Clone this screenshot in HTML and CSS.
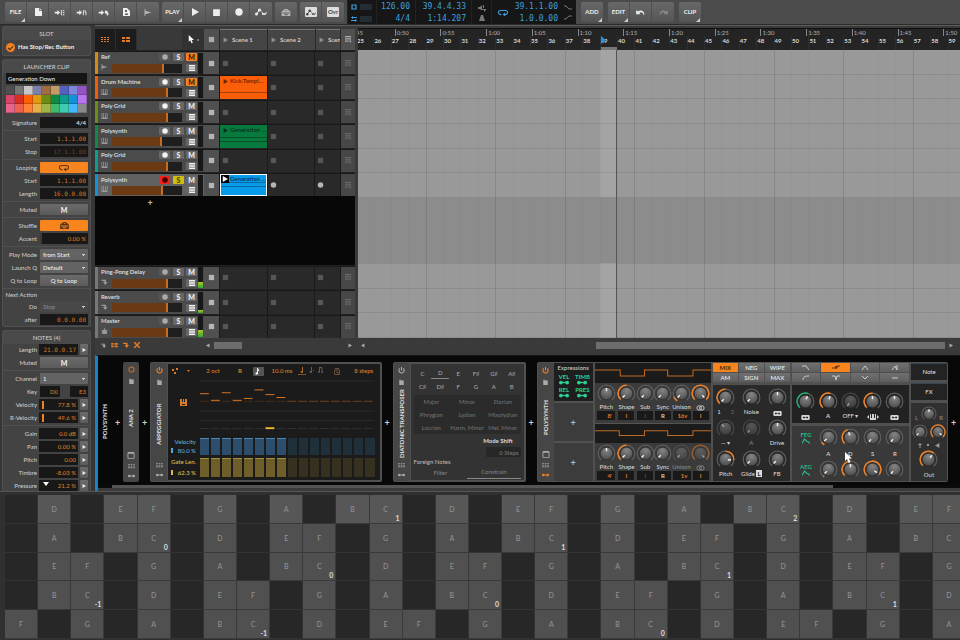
FILE: index.html
```html
<!DOCTYPE html>
<html lang="en">
<head>
<meta charset="utf-8">
<title>Studio</title>
<link rel="stylesheet" href="styles.css">
</head>
<body>
<svg class="defs" width="0" height="0">
  <defs>
    <radialGradient id="cap" cx="50%" cy="25%" r="80%"><stop offset="0" stop-color="#858585"/><stop offset="1" stop-color="#484848"/></radialGradient>
    <symbol id="page" viewBox="0 0 8 8"><path d="M1 0h4v3h3v5H1z"/><path d="M5.600 0l2 2.300h-2z"/></symbol>
    <symbol id="toA" viewBox="0 0 12 8"><path d="M0 3h3V1l3 3-3 3V5H0zM7 1h1v6H7zM9 1h2v1H9zM9 3.500h2v1H9zM9 6h2v1H9z"/></symbol>
    <symbol id="toB" viewBox="0 0 12 8"><path d="M0 3h3V1l3 3-3 3V5H0zM7 1h1v6H7zM9 1h1v2h1v4h-1V4H9z"/></symbol>
    <symbol id="toC" viewBox="0 0 12 8"><path d="M0 3h3V1l3 3-3 3V5H0zM7 2h3v2h1v3H9V5H7z"/></symbol>
    <symbol id="save" viewBox="0 0 8 8"><path fill-rule="evenodd" d="M1 0h4l3 3v5H1zM3 2v2h2V2zM3 5.500V7h3V5.500z"/></symbol>
    <symbol id="audio" viewBox="0 0 8 8"><path d="M0 0v8h1V6l7-2-7-2V0z"/></symbol>
    <symbol id="play" viewBox="0 0 8 8"><path d="M1 0l7 4-7 4z"/></symbol>
    <symbol id="stop" viewBox="0 0 8 8"><path d="M1 1h6v6H1z"/></symbol>
    <symbol id="dot" viewBox="0 0 8 8"><circle cx="4" cy="4" r="3.700"/></symbol>
    <symbol id="auto" viewBox="0 0 12 8"><path fill="none" stroke="currentColor" d="M1.500 6l3-4 2 1"/><circle cx="1.500" cy="6" r="1.500"/><circle cx="4.500" cy="2" r="1.500"/><path fill="none" stroke="currentColor" d="M7 4l1 3 1-2 1 2 1.500-3"/></symbol>
    <symbol id="box" viewBox="0 0 10 8"><path fill-rule="evenodd" d="M0 3l2-2h1V0h4v1h1l2 2v5H0zM1 4v1h8V4zM3 6v1h4V6zM4 1v1h2V1z"/></symbol>
    <symbol id="undo" viewBox="0 0 10 8"><path d="M0 1v5h5L3.500 4.500C5 3 7.500 3.500 8.500 6.500h1C9.500 2 5 .500 2 2.800z"/></symbol>
    <symbol id="loop" viewBox="0 0 12 8"><path fill="none" stroke="currentColor" stroke-width="1.300" d="M4 6.500H3a2.500 2.500 0 0 1 0-5h6a2.500 2.500 0 0 1 0 5H7"/><path d="M8.500 4v4.500L5.500 6.500z"/></symbol>
    <symbol id="keys" viewBox="0 0 8 8"><path d="M0 0h1v6h1V0h1v6h2V0h1v6h1V0h1v8H0z"/></symbol>
    <symbol id="send" viewBox="0 0 8 8"><path d="M0 1h6v3h2L5 8 2 4h2V2.500H0z"/></symbol>
    <symbol id="crown" viewBox="0 0 8 8"><path d="M0 2l2 1.500L4 0l2 3.500L8 2 7 8H1z"/></symbol>
    <symbol id="list" viewBox="0 0 8 8"><path d="M0 0h8v2H0zM0 3h8v2H0zM0 6h8v2H0z"/></symbol>
    <symbol id="queue" viewBox="0 0 8 8"><path d="M0 0h7v1.500H0zM0 2.500h7V4H0zM0 5h4v1.500H0zM4.500 5h3L6 8z"/></symbol>
    <symbol id="rows" viewBox="0 0 8 6"><path d="M0 0h2v1H0zM3 0h2v1H3zM6 0h2v1H6zM0 2h2v1H0zM3 2h2v1H3zM6 2h2v1H6zM0 4h2v1H0zM3 4h2v1H3zM6 4h2v1H6z"/></symbol>
    <symbol id="lanes" viewBox="0 0 8 6"><path d="M0 0h3v2H0zM4 0h4v2H4zM0 3h3v2H0zM4 3h4v2H4z"/></symbol>
    <symbol id="cursor" viewBox="0 0 8 12"><path d="M1 0v9l2-2 1.600 4 1.800-.800L5 6.500h3z"/></symbol>
    <symbol id="power" viewBox="0 0 8 8"><path fill="none" stroke="currentColor" stroke-width="1.200" d="M2 1.600a3 3 0 1 0 4 0M4 0v4"/></symbol>
    <symbol id="folder" viewBox="0 0 8 8"><path d="M1 1h2v1h4v6H1z"/></symbol>
    <symbol id="window" viewBox="0 0 8 8"><path fill-rule="evenodd" d="M1 0h6l1 1v6L7 8H1L0 7V1zM1 2v5h6V2z"/></symbol>
    <symbol id="mod" viewBox="0 0 8 4"><circle cx="1.500" cy="2" r="1.500"/><circle cx="6.500" cy="2" r="1.500"/><path d="M2 1.500h4v1H2z"/></symbol>
    <symbol id="note" viewBox="0 0 8 8"><path d="M3 0h1c0 2 2 2 1.500 4.500C5.300 3.500 5 3 4 3v3.500A1.500 1.300 0 1 1 3 5z"/></symbol>
    <symbol id="env" viewBox="0 0 8 6"><path fill="none" stroke="currentColor" stroke-width="1.200" d="M0 5.500L2.500 1 5 3.500h1l2 2"/></symbol>
    <symbol id="pair" viewBox="0 0 10 6"><path fill-rule="evenodd" d="M1 0h8l1 1v4L9 6H1L0 5V1zM2 2v2h2V2zM6 2v2h2V2zM4 2.700v.600h2v-.600z"/></symbol>
    <symbol id="rings" viewBox="0 0 10 6"><g fill="none" stroke="currentColor"><circle cx="3.500" cy="3" r="2.500"/><circle cx="6.500" cy="3" r="2.500"/></g></symbol>
  </defs>
</svg>

<div class="app">
  <header class="toolbar">
    <div class="tools">
      <button class="menu">FILE</button>
      <button aria-label="New"><svg width="8" height="8"><use href="#page"/></svg></button>
      <button aria-label="Load"><svg width="12" height="7"><use href="#toA"/></svg></button>
      <button aria-label="Import"><svg width="12" height="7"><use href="#toB"/></svg></button>
      <button aria-label="Export"><svg width="12" height="7"><use href="#toC"/></svg></button>
      <button aria-label="Save"><svg width="8" height="8"><use href="#save"/></svg></button>
      <button class="soft" aria-label="Audio"><svg width="8" height="7"><use href="#audio"/></svg></button>
    </div>
    <div class="tools">
      <button class="menu">PLAY</button>
      <button aria-label="Play"><svg width="8" height="8"><use href="#play"/></svg></button>
      <button aria-label="Stop"><svg width="9" height="9"><use href="#stop"/></svg></button>
      <button aria-label="Record"><svg width="8" height="8"><use href="#dot"/></svg></button>
      <button aria-label="Automation"><svg width="12" height="8"><use href="#auto"/></svg></button>
    </div>
    <div class="tools"><button class="soft" aria-label="Groove"><svg width="10" height="7"><use href="#box"/></svg></button></div>
    <div class="tools">
      <button aria-label="Automation write"><span class="lit"><svg width="10" height="7"><use href="#auto"/></svg></span></button>
      <button><span class="lit">Ovr</span></button>
    </div>
    <div class="transport">
      <div class="cell marks">
        <span><svg width="6" height="6" viewBox="0 0 6 6"><path fill="none" stroke="currentColor" stroke-width="1.200" d="M1 1h4v4H1z"/></svg><i></i></span>
        <span><svg width="6" height="6" viewBox="0 0 6 6"><path d="M0 1.500L2 0v1h4v1H2v1zM6 4.500L4 3v1H0v1h4v1z"/></svg><i></i></span>
      </div>
      <div class="cell tempo"><span>126.00</span><span>4/4</span></div>
      <div class="cell time"><span>39.4.4.33</span><span>1:14.207</span></div>
      <div class="cell click">
        <svg width="8" height="8" viewBox="0 0 8 8"><path d="M0 3h2l2-2v4h4v1L6 8V6H3L2 5H0zM5 1h1v3H5z"/></svg>
        <svg width="6" height="6" viewBox="0 0 6 6"><path d="M2 0h2l2 6H0zM5.500 0L3 4"/></svg>
      </div>
      <div class="cell loopicon"><svg width="10" height="7"><use href="#loop"/></svg></div>
      <div class="cell time pos"><span>39.1.1.00</span><span>1.0.0.00</span></div>
      <div class="cell click punch">
        <svg width="8" height="5" viewBox="0 0 8 5"><path fill="none" stroke="currentColor" d="M0 1h2l3 3h3"/></svg>
        <svg width="8" height="5" viewBox="0 0 8 5"><path fill="none" stroke="currentColor" d="M0 4h2l3-3h3"/></svg>
      </div>
    </div>
    <div class="tools"><button class="menu">ADD</button></div>
    <div class="tools">
      <button class="menu">EDIT</button>
      <button aria-label="Undo"><svg width="9" height="7"><use href="#undo"/></svg></button>
      <button class="off" aria-label="Redo"><svg class="flip" width="9" height="7"><use href="#undo"/></svg></button>
    </div>
    <div class="tools"><button class="menu">CLIP</button></div>
  </header>

  <aside class="inspector">
    <section class="panel">
      <h2>SLOT</h2>
      <label class="check"><input type="checkbox" checked><span>Has Stop/Rec Button</span></label>
    </section>
    <section class="panel">
      <h2>LAUNCHER CLIP</h2>
      <input class="name" type="text" value="Generation Down" aria-label="Clip name">
      <div class="palette" id="palette"></div>
      <div class="group first"><div class="row"><label for="sig">Signature</label><input id="sig" class="light" value="4/4"></div></div>
      <div class="group">
        <div class="row"><label for="st">Start</label><input id="st" class="num" value="1.1.1.00"></div>
        <div class="row"><label for="sp">Stop</label><input id="sp" class="num dim" value="17.1.1.00"></div>
      </div>
      <div class="group">
        <div class="row"><span>Looping</span><button class="on" aria-label="Looping"><svg width="10" height="7"><use href="#loop"/></svg></button></div>
        <div class="row"><label for="ls">Start</label><input id="ls" class="num" value="1.1.1.00"></div>
        <div class="row"><label for="ll">Length</label><input id="ll" class="num" value="16.0.0.00"></div>
      </div>
      <div class="group"><div class="row"><span>Muted</span><button class="bold">M</button></div></div>
      <div class="group">
        <div class="row"><span>Shuffle</span><button class="on" aria-label="Shuffle"><svg width="9" height="7"><use href="#box"/></svg></button></div>
        <div class="row"><label for="ac">Accent</label><input id="ac" value="0.00 %"></div>
      </div>
      <div class="group">
        <div class="row"><label for="pm">Play Mode</label><select id="pm"><option>from Start</option></select></div>
        <div class="row"><label for="lq">Launch Q</label><select id="lq"><option>Default</option></select></div>
        <div class="row"><span>Q to Loop</span><button>Q to Loop</button></div>
      </div>
      <div class="group">
        <div class="row head"><span>Next Action</span></div>
        <div class="row"><label for="do">Do</label><select id="do" disabled><option>Stop</option></select></div>
        <div class="row"><label for="af">after</label><input id="af" class="num" value="0.0.0.00"></div>
      </div>
    </section>
    <section class="panel notes">
      <h2>NOTES (4)</h2>
      <div class="group first">
        <div class="row"><label for="nl">Length</label><input id="nl" class="num" value="21.0.0.17"><button class="step" aria-label="More"><svg width="4" height="4"><use href="#play"/></svg></button></div>
        <div class="row"><span>Muted</span><button class="bold">M</button></div>
      </div>
      <div class="group">
        <div class="row"><label for="ch">Channel</label><select id="ch"><option>1</option></select></div>
        <div class="row"><label for="k1">Key</label><input id="k1" class="key" value="D0"><input class="key" value="E3" aria-label="Highest key"></div>
        <div class="row"><label for="ve">Velocity</label><input id="ve" class="bar" value="77.8 %"><button class="step" aria-label="More"><svg width="4" height="4"><use href="#play"/></svg></button></div>
        <div class="row"><label for="rv">R-Velocity</label><input id="rv" class="bar" value="49.6 %"><button class="step" aria-label="More"><svg width="4" height="4"><use href="#play"/></svg></button></div>
      </div>
      <div class="group">
        <div class="row"><label for="ga">Gain</label><input id="ga" value="0.0 dB"><button class="step" aria-label="More"><svg width="4" height="4"><use href="#play"/></svg></button></div>
        <div class="row"><label for="pa">Pan</label><input id="pa" value="0.00 %"><button class="step" aria-label="More"><svg width="4" height="4"><use href="#play"/></svg></button></div>
        <div class="row"><label for="pi">Pitch</label><input id="pi" value="0.00"><button class="step" aria-label="More"><svg width="4" height="4"><use href="#play"/></svg></button></div>
        <div class="row"><label for="ti">Timbre</label><input id="ti" value="-8.03 %"><button class="step" aria-label="More"><svg width="4" height="4"><use href="#play"/></svg></button></div>
        <div class="row"><label for="pr">Pressure</label><input id="pr" value="21.2 %"><button class="step" aria-label="More"><svg width="4" height="4"><use href="#play"/></svg></button></div>
      </div>
    </section>
    <svg class="more" width="6" height="4" viewBox="0 0 6 4"><path d="M0 0h6L3 4z"/></svg>
  </aside>

  <section class="launcher">
    <div class="lhead">
      <button class="view" aria-label="Launcher view"><svg width="8" height="6"><use href="#rows"/></svg></button>
      <button class="view" aria-label="Arranger view"><svg width="8" height="6"><use href="#lanes"/></svg></button>
      <span class="blank"></span>
      <button class="pointer" aria-label="Pointer tool"><svg width="6" height="9"><use href="#cursor"/></svg><i></i></button>
      <span class="stopcol"><svg width="7" height="7"><use href="#stop"/></svg></span>
      <button class="scene"><svg width="5" height="6"><use href="#play"/></svg>Scene 1</button>
      <button class="scene"><svg width="5" height="6"><use href="#play"/></svg>Scene 2</button>
      <button class="scene"><svg width="5" height="6"><use href="#play"/></svg>Scene 3</button>
      <span class="endcol"><svg width="7" height="7"><use href="#queue"/></svg></span>
    </div>
    <div class="tracks main" id="tracks"></div>
    <div class="void"><button aria-label="Add track">+</button></div>
    <div class="tracks fx" id="effects"></div>
    <div class="lfoot">
      <svg class="grey" width="5" height="5"><use href="#send"/></svg>
      <svg width="7" height="5"><use href="#lanes"/></svg>
      <svg width="6" height="6"><use href="#send"/></svg>
      <svg width="6" height="6" viewBox="0 0 6 6"><path fill="none" stroke="currentColor" stroke-width="1.500" d="M0 0l6 6M6 0L0 6"/></svg>
      <div class="scroll"><svg class="flip" width="4" height="5"><use href="#play"/></svg><i></i><svg width="4" height="5"><use href="#play"/></svg></div>
    </div>
  </section>

  <section class="arranger">
    <div class="ruler"><div class="times" id="times"></div><div class="bars" id="bars"></div></div>
    <div class="canvas">
      <div class="lanes main"><i></i><i></i><i></i><i></i><i></i><i></i></div>
      <div class="lanes gap"></div>
      <div class="lanes fx"><i></i><i></i><i></i></div>
      <div class="columns" id="columns"></div>
    </div>
    <div class="afoot"><svg class="flip" width="4" height="5"><use href="#play"/></svg><i></i><svg width="4" height="5"><use href="#play"/></svg></div>
  </section>

  <section class="devices">
    <div class="chain">
      <div class="rail root"><b>POLYSYNTH</b></div>
      <button class="plus">+</button>
      <div class="rail boxed"><svg class="orange" width="7" height="7" viewBox="0 0 8 8"><circle cx="4" cy="4" r="3" fill="none" stroke="currentColor"/></svg><svg width="7" height="6"><use href="#folder"/></svg><b>ANA 2</b><svg width="8" height="7"><use href="#window"/></svg><svg width="7" height="5"><use href="#rows"/></svg><svg width="7" height="4"><use href="#mod"/></svg></div>
      <button class="plus">+</button>

      <article class="device arp">
        <div class="rail"><svg class="orange" width="7" height="7"><use href="#power"/></svg><svg width="7" height="6"><use href="#folder"/></svg><b>ARPEGGIATOR</b><svg width="7" height="5"><use href="#rows"/></svg><svg width="7" height="4"><use href="#mod"/></svg></div>
        <div class="arpbody">
          <div class="arptop">
            <svg width="6" height="6" viewBox="0 0 6 6"><path d="M0 1h2v2H0zM2 4h2v2H2zM4 0h2v2H4z"/></svg>
            <svg width="3" height="2" viewBox="0 0 3 2"><path d="M0 0h3L1.500 2z"/></svg>
            <span>2 oct</span><b>R</b>
            <button aria-label="Note timing"><svg width="8" height="7"><use href="#note"/></svg></button>
            <span>10.0 ms</span>
            <svg class="feel" width="26" height="8" viewBox="0 0 26 8"><path d="M4 0h1v5a1.300 1 0 1 1-1-1z" fill="#b06a2a"/><path d="M0 7h8v1H0z" fill="#8a5020"/><path d="M13 0h1v5a1.300 1 0 1 1-1-1zM15 3h1v1h-1zM21 0h3l1 5a1 1 0 1 1-1-1l-1-3h-1v4a1 1 0 1 1-1-1z" fill="#5d5d5d"/></svg>
            <svg class="faint" width="6" height="7" viewBox="0 0 6 7"><path fill="none" stroke="currentColor" d="M1 .500h4M.500 2h5v4.500h-5zM3 3v2h2"/></svg>
            <span>8 steps</span>
          </div>
          <div class="arpgrid">
            <div class="pad"><svg width="7" height="7" viewBox="0 0 7 7"><path fill-rule="evenodd" d="M0 0h2v3h1V0h1v3h1V0h2v7H0zM2 5v1h3V5z"/></svg></div>
            <svg class="pattern" id="pattern" viewBox="0 0 176 58" preserveAspectRatio="none"></svg>
            <div class="lab blue"><span>Velocity</span><span><i></i>80.0 %</span></div>
            <div class="bins blue" id="vel"></div>
            <div class="lab yellow"><span>Gate Len.</span><span><i></i>62.3 %</span></div>
            <div class="bins yellow" id="gate"></div>
          </div>
        </div>
      </article>
      <button class="plus">+</button>

      <article class="device dia">
        <div class="rail"><svg width="7" height="7"><use href="#power"/></svg><svg width="7" height="6"><use href="#folder"/></svg><b>DIATONIC TRANSPOSER</b><svg width="7" height="5"><use href="#rows"/></svg><svg width="7" height="4"><use href="#mod"/></svg></div>
        <div class="diabody">
          <div class="roots"><button>C</button><button class="sel">D</button><button>E</button><button>F♯</button><button>G♯</button><button>A♯</button><button>C♯</button><button>D♯</button><button>F</button><button>G</button><button>A</button><button>B</button></div>
          <div class="modes"><button>Major</button><button>Minor</button><button>Dorian</button><button>Phrygian</button><button>Lydian</button><button>Mixolydian</button><button>Locrian</button><button>Harm. Minor</button><button>Mel. Minor</button></div>
          <label class="shift" for="ms">Mode Shift</label>
          <input id="ms" value="0 Steps">
          <div class="foreign">Foreign Notes</div>
          <div class="pick"><button>Filter</button><button class="sel">Constrain</button></div>
        </div>
      </article>
      <button class="plus">+</button>

      <article class="device poly">
        <div class="rail"><svg class="orange" width="7" height="7"><use href="#power"/></svg><svg width="7" height="6"><use href="#folder"/></svg><b>POLYSYNTH</b><svg width="8" height="7"><use href="#window"/></svg><svg width="7" height="5"><use href="#rows"/></svg><svg class="orange" width="7" height="4"><use href="#mod"/></svg></div>
        <div class="mods">
          <div class="expr"><h3>Expressions</h3>
            <span>VEL<svg width="10" height="5"><use href="#mod"/></svg></span><span>TIMB<svg width="10" height="5"><use href="#mod"/></svg></span><span>REL<svg width="10" height="5"><use href="#mod"/></svg></span><span>PRES<svg width="10" height="5"><use href="#mod"/></svg></span>
          </div>
          <button>+</button><button>+</button>
        </div>
        <div class="oscs">
          <div class="wave"><svg viewBox="0 0 115 20" preserveAspectRatio="none"><path d="M0 7h25v6h24V7h23v6h25V7h18"/></svg></div>
          <div class="osc">
            <span><i class="knob" data-a="0"></i>Pitch</span><span><i class="knob" data-a="-135" data-arc="-135,0"></i>Shape</span><span><i class="knob" data-a="-135"></i>Sub</span><span><i class="knob" data-a="-135"></i>Sync</span><span><i class="knob" data-a="-135" data-arc="-150,-115"></i>Unison</span><span><i class="knob" data-a="135" data-arc="-135,135"></i><svg width="9" height="6"><use href="#rings"/></svg></span>
            <input value="8'" aria-label="Octave 1"><button>I</button><button class="off">I</button><button class="w">R</button><input value="16v" aria-label="Voices 1"><button>I</button>
          </div>
          <div class="wave second"><svg viewBox="0 0 115 20" preserveAspectRatio="none"><path d="M0 7h24v5h25V7h23v5h25V7h18"/></svg></div>
          <div class="osc">
            <span><i class="knob" data-a="0"></i>Pitch</span><span><i class="knob" data-a="-135" data-arc="-135,0"></i>Shape</span><span><i class="knob" data-a="-135"></i>Sub</span><span><i class="knob" data-a="-135"></i>Sync</span><span class="fade"><i class="knob" data-a="-135"></i>Unison</span><span class="fade"><i class="knob" data-a="135" data-arc="-135,135"></i><svg width="9" height="6"><use href="#rings"/></svg></span>
            <input value="4'" aria-label="Octave 2"><button>I</button><button class="off">I</button><button class="w">R</button><input value="1v" aria-label="Voices 2"><button>I</button>
          </div>
        </div>
        <div class="mix">
          <div class="tabs three"><button class="on">MIX</button><button>NEG</button><button>WIPE</button><button>AM</button><button>SIGN</button><button>MAX</button></div>
          <div class="mixknobs">
            <span><i class="knob" data-a="-135" data-arc="-135,0"></i><span class="ab">1<s>2</s></span></span><span><i class="knob" data-a="-135"></i>Noise</span><span><i class="knob" data-a="0"></i><svg width="9" height="5"><use href="#pair"/></svg></span>
            <span><i class="knob low" data-a="-40"></i>— ▾</span><span class="fade"><i class="knob" data-a="-135"></i>A</span><span><i class="knob" data-a="0"></i>Drive</span>
            <span><i class="knob" data-a="95" data-arc="0,95"></i>Pitch</span><span><i class="knob" data-a="-135"></i><span>Glide <b class="l">L</b></span></span><span><i class="knob" data-a="-135"></i>FB</span>
          </div>
        </div>
        <div class="filter">
          <div class="tabs four">
            <button aria-label="Low-pass"><svg viewBox="0 0 8 5"><path d="M0 1h4l3 4"/></svg></button><button class="on" aria-label="Low-pass MG"><svg viewBox="0 0 8 5"><path d="M0 3h3l1-2v3l1-3h3M5 1v2"/></svg></button><button aria-label="Band-pass"><svg viewBox="0 0 8 5"><path d="M1 5l3-4 3 4"/></svg></button><button aria-label="Peak"><svg viewBox="0 0 8 5"><path d="M1 5l3-4 2 4V0"/></svg></button>
            <button aria-label="High-pass"><svg viewBox="0 0 8 5"><path d="M1 5c0-3 2-4 6-4"/></svg></button><button aria-label="High-pass MG"><svg viewBox="0 0 8 5"><path d="M0 1h3l1 4 1-4h3"/></svg></button><button aria-label="Notch"><svg viewBox="0 0 8 5"><path d="M1 1l3 3 3-3"/></svg></button><button aria-label="Off"><svg viewBox="0 0 8 5"><path d="M1 3h6"/></svg></button>
          </div>
          <div class="fknobs">
            <span><i class="knob" data-a="20" data-arc="-135,20" data-c="#20b070"></i><svg width="9" height="5"><use href="#pair"/></svg></span><span><i class="knob" data-a="15" data-arc="-135,15"></i><b>A</b></span><span><i class="knob shade" data-a="-145"></i>OFF ▾</span><span><i class="knob" data-a="0" data-arc="-135,0"></i><svg width="12" height="6" viewBox="0 0 12 6"><path d="M0 3l2-2v4zM12 3l-2-2v4zM3 0h1v4h1V0h2v4h1V0h1v6H3z"/></svg></span><span><i class="knob" data-a="0"></i><svg width="9" height="5"><use href="#pair"/></svg></span>
          </div>
          <div class="envs">
            <span class="tag">FEG<svg width="8" height="6"><use href="#env"/></svg></span><i class="knob" data-a="-130" data-arc="-150,-125"></i><i class="knob" data-a="-20" data-arc="-135,-20"></i><i class="knob" data-a="-140"></i><i class="knob" data-a="-140"></i>
            <span></span><span>A</span><span>D</span><span>S</span><span>R</span>
            <span class="tag">AEG<svg width="8" height="6"><use href="#env"/></svg></span><i class="knob" data-a="-135" data-arc="-150,-140"></i><i class="knob" data-a="0" data-arc="-135,0"></i><i class="knob" data-a="125" data-arc="-135,125"></i><i class="knob" data-a="-140"></i>
          </div>
          <svg class="mouse" width="8" height="12"><use href="#cursor"/></svg>
        </div>
        <div class="output">
          <button>Note</button><button>FX</button>
          <div class="outs">
            <div class="pan"><i>L</i><i class="knob" data-a="0"></i><i>R</i></div>
            <div class="duo"><i class="knob" data-a="-135"></i><i class="knob" data-a="130" data-arc="-135,135"></i></div>
            <div class="marks2"><svg width="4" height="5" viewBox="0 0 4 5"><path d="M2 0l2 2H2.500v3h-1V2H0z"/></svg><svg width="2" height="2" viewBox="0 0 2 2"><path d="M0 0h2v2H0z"/></svg><svg class="flip" width="5" height="5"><use href="#play"/></svg></div>
            <i class="knob big" data-a="40" data-arc="-135,40"></i>
            <i>Out</i>
          </div>
        </div>
      </article>
      <button class="plus">+</button>
    </div>
    <div class="dscroll"><i></i></div>
  </section>

  <section class="keyboard"><div class="pads" id="pads"></div></section>
</div>
<script src="app.js"></script>
</body>
</html>
```

FILE: styles.css
```css
* { box-sizing: border-box; }
html, body { height: 100%; }
body {
  margin: 0;
  background: #2e2e2e;
  color: #c9c9c9;
  font: 6px/8px Lato, "Open Sans", sans-serif;
  font-weight: 500;
  overflow: hidden;
}
.defs { position: absolute; }
svg { fill: currentColor; flex: none; }
button, input, select {
  margin: 0; padding: 0; border: 0; border-radius: 0; min-width: 0;
  background: none; color: inherit; font: inherit; appearance: none; outline: 0;
}
i { font-style: normal; }
s { text-decoration: none; }
h2, h3 { margin: 0; font: inherit; text-align: center; }

.app {
  height: 100vh;
  display: grid;
  grid-template-columns: 95px 261px 1fr;
  grid-template-rows: 25px minmax(0, 330fr) minmax(0, 136fr) minmax(0, 149fr);
}

/* Toolbar */
.toolbar {
  grid-column: 1 / -1;
  display: flex; align-items: flex-start; gap: 3px;
  padding: 0 5px;
  background: #4b4b4b;
  border-bottom: 1px solid #2b2b2b;
}
.tools { display: flex; margin-top: 2px; border-radius: 2px; background: linear-gradient(#686868, #555); overflow: hidden; }
.tools button {
  position: relative; width: 22px; height: 20px;
  display: flex; align-items: center; justify-content: center;
  border-right: 1px solid #4e4e4e; color: #eee; font-weight: 700;
}
.tools button:last-child { border-right: 0; }
.tools .menu::after { content: ""; position: absolute; right: 1px; bottom: 0; border: 2px solid; border-color: transparent #ccc #ccc transparent; }
.tools .soft { color: #b5b5b5; }
.tools .off { color: #888; }
.flip { transform: scaleX(-1); }
.lit { display: flex; align-items: center; justify-content: center; width: 12px; height: 10px; border-radius: 1px; background: #ddd; color: #444; }
.transport ~ .tools { margin-left: 2px; }
.transport { display: flex; height: 24px; background: #161616; color: #3fa0dd; font: 8px/12px "DejaVu Sans Mono", monospace; }
.cell { display: flex; flex-direction: column; align-items: flex-end; padding: 0 5px; border-left: 1px solid #222; }
.cell > span { height: 12px; padding-top: 1px; }
.marks { width: 29px; padding: 0 4px 0 3px; }
.marks > span { display: flex; align-items: center; gap: 3px; }
.marks i { width: 12px; height: 6px; background: #242d33; }
.tempo { width: 39px; }
.time { width: 56px; }
.time.pos { width: 47px; border: 0; padding: 0 2px; }
.click { width: 20px; color: #777; justify-content: space-around; align-items: center; padding: 2px 0; }
.punch { width: 16px; border: 0; }
.loopicon { width: 22px; justify-content: center; }

/* Inspector */
.inspector {
  position: relative;
  grid-row: 2 / 4; min-height: 0; overflow: hidden;
  padding: 1px 4px 0 2px;
  background: #363636;
}
.panel { background: #434343; border: 1px solid #505050; border-radius: 2px; padding: 0 3px 1px 3px; margin-bottom: 3px; }
.panel h2 { height: 13px; line-height: 13px; color: #ccc; margin: 0 -3px; background: #4a4a4a; }
.check { display: flex; align-items: center; gap: 3px; height: 14px; color: #eee; font-weight: 700; }
.check input { width: 9px; height: 9px; border-radius: 50%; background: #f58020; display: grid; place-items: center; }
.check input::after { content: ""; width: 4px; height: 2px; border: 1px solid #331; border-top: 0; border-right: 0; transform: rotate(-45deg); }
.name { display: block; width: 100%; height: 11px; margin: 0 0 2px; padding: 0 2px; background: #161616; color: #e4e4e4; }
.palette { display: grid; grid-template-columns: repeat(9, 1fr); grid-auto-rows: 9px; background: #2b2b2b; margin-bottom: 4px; }
.palette i { box-shadow: inset -1px -1px #0003; }
.group { border-top: 1px solid #505050; margin: 2px -3px 0; padding: 2px 3px 0; display: grid; gap: 2px; }
.group.first { border-top: 0; margin-top: 0; padding-top: 0; }
.row { display: grid; grid-template-columns: 31px 1fr; column-gap: 3px; align-items: center; height: 11px; margin-right: -1px; }
.row.head { height: 8px; }
.row > :first-child { text-align: right; white-space: nowrap; justify-self: end; }
.row input { width: 100%; height: 11px; padding: 0 2px; background: #181818; color: #d87a26; text-align: right; }
.row input.num { font: 6px/11px "DejaVu Sans Mono", monospace; }
.row input.dim { color: #6a4526; }
.row input.light { color: #ddd; font-weight: 700; }
#ac { border-left: 2px solid #3a3a3a; }
.row button, .row select { width: 100%; height: 11px; background: linear-gradient(#6b6b6b, #5b5b5b); color: #eee; display: flex; align-items: center; justify-content: center; border-radius: 1px; }
.row select { padding: 0 3px; display: block; background: linear-gradient(45deg, transparent 50%, #ccc 50%) 42px 5px / 2px 2px no-repeat, linear-gradient(-45deg, transparent 50%, #ccc 50%) 44px 5px / 2px 2px no-repeat, #636363; }
.row select:disabled { background-color: #484848; color: #888; opacity: 1; }
.row .on { background: #f8841d; color: #5c3418; }
.row .bold { font-weight: 900; font-size: 7px; }
.notes .row:has(.step) { grid-template-columns: 31px 1fr 8px; column-gap: 2px; }
.notes .row:has(.key) { grid-template-columns: 31px 20px 1fr; column-gap: 3px; }
.notes .row .key + .key { width: 18px; justify-self: end; }
.row input.bar { border-left: 3px solid #1c1c1c; background: linear-gradient(#f58020, #f58020) 0 2px / 2px 8px no-repeat #181818; }
.notes { padding-bottom: 0; }
.more { position: absolute; left: 43px; bottom: 5px; color: #fff; }

/* Launcher */
.launcher { display: flex; flex-direction: column; padding: 3px 1px 3px 0; min-width: 0; background: #3a3a3a; border-top: 1px solid #5c5c5c; }
.lhead { display: flex; height: 21px; background: #282828; }
.lhead > * { display: flex; align-items: center; justify-content: center; }
.view { width: 21px; color: #e07a24; background: #1c1c1c; border-right: 1px solid #2e2e2e; }
.blank { flex: 1; background: #393939; }
.pointer { width: 22px; background: #323232; color: #fff; gap: 3px; }
.pointer i { width: 2px; height: 2px; background: #777; }
.stopcol, .endcol { background: #505050; color: #aaa; display: flex; align-items: center; justify-content: center; }
.stopcol { width: 15px; margin-right: 1px; }
.endcol { width: 14px; }
.lhead .scene { width: 47px; justify-content: flex-start; gap: 4px; padding-left: 3px; margin-right: 1px; background: #454545; border-top: 1px solid #777; white-space: nowrap; overflow: hidden; font-weight: 700; }
.lhead .scene svg { color: #909090; }
.lhead .scene:nth-of-type(6) { width: 24px; }
.tracks { display: grid; grid-auto-rows: 1fr; background: #191919; min-height: 0; }
.tracks.main { flex: 148; }
.tracks.fx { flex: 74; }
.track { display: grid; grid-template-columns: 109px 16px 48px 47px 26px 14px; border-top: 1px solid #222; padding-top: 1px; min-height: 0; }
.strip { display: grid; grid-template-columns: 14px 1fr 14px 13px 12px 5px; align-content: space-evenly; align-items: center; border-left: 3px solid; background: #4b4b4b; padding: 0 1px 0 3px; }
.strip.active { background: #616161; }
.strip .tname { grid-column: 1 / 3; color: #e0e0e0; white-space: nowrap; font-weight: 600; }
.strip button { width: 11px; height: 8px; background: #676767; color: #f2f2f2; border-radius: 1px; display: grid; place-items: center; font-weight: 900; font-size: 7px; line-height: 8px; }
.strip .mute { background: #f58020; color: #3a1c00; }
.strip .armed { background: #f3221a; color: #400; }
.strip .solo { background: #d2be10; color: #4c4200; }
.strip .idle { background: #555; color: #aaa; }
.strip .ticon { color: #999; grid-row: 2; }
.strip input { grid-column: 2 / 5; grid-row: 2; width: 70px; height: 9px; margin-left: -3px; background: linear-gradient(90deg, #6b3a12 var(--v), #1e1e1e var(--v)); }
.strip input::-webkit-slider-thumb { appearance: none; width: 2px; height: 9px; background: #c66e25; }
.strip .opt { grid-column: 5; grid-row: 2; }
.meter { grid-column: 6; grid-row: 1 / 3; width: 5px; height: 21px; background: #181818; display: flex; align-items: flex-end; }
.meter b { width: 100%; background: linear-gradient(#b5c42a, #2fa82f); }
.slot { background: #292929; margin-right: 1px; display: flex; align-items: center; padding-left: 2px; color: #565656; min-width: 0; }
.slot.rec { color: #b5b5b5; }
.clip { position: relative; flex: 1; display: flex; align-items: flex-start; align-self: stretch; margin-left: -2px; overflow: hidden; padding: 1px 0 0 10px; color: #0009; font-weight: 700; white-space: nowrap; background: var(--c); }
.clip::after { content: ""; position: absolute; left: 0; right: 0; bottom: 6px; height: 1px; background: #0005; box-shadow: 0 -4px var(--l); }
.clip svg { position: absolute; left: 3px; top: 3px; }
.clip.sel { border: 1px solid #fff; color: #033a66; padding: 0 0 0 9px; }
.clip.sel svg { left: 0; top: 0; background: #000; color: #fff; padding: 1px; width: 8px; height: 8px; }
.clip.sel::after { bottom: 8px; }
.track .endcol { width: auto; color: #696969; background: #474747; }
.track .stopcol { width: auto; color: #b5b5b5; }
.void { flex: 66; background: #070707; padding: 3px 0 0 51px; }
.void button { width: 8px; height: 8px; font: 700 9px/8px Lato; display: block; color: #bbb; }
.lfoot { display: flex; align-items: center; height: 14px; padding: 0 3px 0 6px; gap: 5px; color: #e07a24; background: #3a3a3a; }
.lfoot .grey { color: #aaa; }
.scroll, .afoot { display: flex; align-items: center; color: #aaa; }
.scroll { width: 146px; margin-left: auto; gap: 4px; }
.scroll i, .afoot i { width: 28px; height: 7px; background: #6d6d6d; }
.scroll svg:last-child { margin-left: auto; }

/* Arranger */
.arranger { display: flex; flex-direction: column; padding: 2px 0 3px 2px; background: #3a3a3a; border-top: 1px solid #5c5c5c; overflow: hidden; min-width: 0; }
.ruler { height: 22px; background: #242424; overflow: hidden; border-top: 1px solid #111; }
.times { display: grid; grid-template-columns: repeat(14, 1fr); margin: 0 -29px 0 -9px; height: 7px; line-height: 7px; color: #aaa; }
.times i { border-left: 1px solid #888; padding-left: 1px; }
.bars { display: grid; grid-template-columns: repeat(35, 1fr); margin: 0 -5px 0 -2px; height: 15px; line-height: 10px; color: #d8d8d8; font-weight: 700; }
.bars i { border-left: 1px solid #2e2e2e; }
.bars i:nth-child(15) { background: linear-gradient(#777, #777) 0 11px / 100% 4px no-repeat; position: relative; }
.bars i:nth-child(15)::before { content: ""; position: absolute; left: 0; top: 0; border: 4px solid transparent; border-left: 5px solid #2a8fd4; border-right: 0; }
.canvas { position: relative; flex: 1; display: flex; flex-direction: column; background: #999; overflow: hidden; }
.lanes { display: grid; }
.lanes i { border-bottom: 1px solid #8b8b8b; }
.lanes.main { flex: 148; }
.lanes.gap { flex: 66; background: #8c8c8c; }
.lanes.fx { flex: 74; }
.columns { position: absolute; inset: 0 -5px 0 -2px; display: grid; grid-template-columns: repeat(35, 1fr); }
.columns i { border-left: 1px solid #00000005; }
.columns i:nth-child(4n + 1) { border-left-color: #0000001c; }
.columns i:nth-child(15) { background: linear-gradient(#ffffff1c 51%, transparent 51%, transparent 74%, #ffffff1c 74%); border-right: 1px solid #555; }
.afoot { height: 14px; padding: 0 7px 0 3px; }
.afoot i { width: 59%; margin: 0 4px 0 auto; }

/* Devices */
.devices { grid-column: 2 / -1; display: flex; flex-direction: column; border-top: 1px solid #151515; border-left: 3px solid #1583c8; background: #080808; min-width: 0; min-height: 0; }
.chain { flex: 1; display: flex; padding: 6px 1px 3px 0; min-height: 0; }
.plus { width: 11px; flex: none; font: 700 9px/9px Lato; color: #ccc; }
.rail { width: 16px; display: flex; flex-direction: column; align-items: center; gap: 5px; padding: 4px 0; background: #464646; color: #aaa; border-radius: 2px; flex: none; min-height: 0; }
.rail b { flex: 1; writing-mode: vertical-rl; transform: rotate(180deg); text-align: center; white-space: nowrap; color: #e2e2e2; min-height: 0; }
.rail.root { background: none; width: 14px; }
.orange { color: #f58020; }
.device { display: flex; background: #505050; border-radius: 2px; padding: 1px; min-width: 0; }
.arp { flex: 231; }
.dia { flex: 132; }
.poly { flex: 412; gap: 2px; }

.arpbody { flex: 1; margin: 1px; background: #1b1b1b; display: flex; flex-direction: column; color: #d87a26; min-width: 0; }
.arptop { display: grid; grid-template-columns: 14px 12px 38px 16px 20px 28px 30px 22px 1fr; align-items: center; justify-items: center; height: 14px; white-space: nowrap; font-weight: 600; }
.arptop button { width: 11px; height: 9px; background: #555; color: #fff; display: grid; place-items: center; border-radius: 1px; }
.faint { color: #6a5038; }
.arpgrid { flex: 1; display: grid; grid-template-columns: 28px 1fr; grid-template-rows: 59fr 19fr 20fr; gap: 3px 4px; padding: 2px 5px 3px 0; min-height: 0; }
.pad { padding: 19px 0 0 12px; }
.pattern { width: 100%; height: 100%; min-height: 0; }
.lab { display: flex; flex-direction: column; justify-content: space-between; align-items: flex-end; white-space: nowrap; font-weight: 600; }
.lab i { display: inline-block; width: 2px; height: 5px; margin-right: 5px; background: currentColor; }
.blue { color: #55a4dc; --on: #2c4d6b; --top: #4d87b5; --off: #20303b; }
.yellow { color: #d5b84e; --on: #6e5f2a; --top: #a48f40; --off: #36301f; }
.bins { display: grid; grid-template-columns: repeat(16, 1fr); gap: 2px; }
.bins i { background: var(--off); }
.bins i.f { background: var(--on); border-top: 1px solid var(--top); }

.diabody { flex: 1; margin: 1px; padding: 4px 3px 1px; background: #333; display: flex; flex-direction: column; color: #a5a5a5; min-width: 0; }
.roots { display: grid; grid-template-columns: repeat(6, 1fr); grid-auto-rows: 11px; row-gap: 2px; padding-bottom: 3px; }
.roots .sel, .pick .sel { border-bottom: 1px solid #888; }
.modes { display: grid; grid-template-columns: repeat(3, 1fr); grid-auto-rows: 13px; background: #2b2b2b; color: #707070; white-space: nowrap; }
.shift { text-align: right; padding: 3px 8px 2px 0; color: #ddd; font-weight: 700; }
.diabody input { align-self: flex-end; width: 35px; height: 11px; background: #272727; color: #777; text-align: right; padding-right: 2px; }
.foreign { color: #b5b5b5; line-height: 9px; }
.pick { display: grid; grid-template-columns: 1fr 1fr; height: 14px; margin-top: auto; color: #808080; }

.mods { flex: 39; display: grid; grid-template-rows: 38fr 38fr 38fr; gap: 2px; min-width: 0; }
.mods > button { background: #3c3c3c; font: 700 9px/9px Lato; color: #bbb; }
.poly > .rail { margin-right: -2px; }
.expr { background: #1e1e1e; display: grid; grid-template-columns: 1fr 1fr; align-content: space-between; padding: 1px 1px 3px; min-height: 0; color: #2bd394; }
.expr h3 { grid-column: 1 / 3; color: #ccc; }
.expr span { display: flex; flex-direction: column; align-items: center; line-height: 6px; font-weight: 700; }
.oscs { flex: 116; display: flex; flex-direction: column; background: #3b3b3b; min-width: 0; }
.wave { height: 20px; background: #1b1b1b; }
.wave.second { border-top: 1px solid #555; margin-top: 2px; }
.wave svg { display: block; width: 100%; height: 100%; fill: none; stroke: #c06a22; stroke-width: 1; }
.osc { flex: 1; display: grid; grid-template-columns: 21fr 19fr 18fr 17fr 20fr 18fr; justify-items: center; align-content: space-evenly; padding: 0 1px; }
.osc span, .mixknobs > span, .fknobs > span { display: flex; flex-direction: column; align-items: center; justify-content: space-between; white-space: nowrap; color: #d5d5d5; }
.osc span { height: 27px; min-width: 0; }
.osc input, .osc > button { width: 16px; height: 9px; background: #191919; color: #e07a24; text-align: center; font-weight: 700; line-height: 9px; }
.osc input { text-align: right; padding-right: 3px; width: 18px; }
.osc .off { color: #6a4526; }
.osc .w { color: #ccc; }
.fade { opacity: .5; }
.knob { display: block; width: 19px; height: 19px; flex: none; }
.knob svg { display: block; width: 100%; height: 100%; }
.low, .shade { opacity: .6; }

.mix { flex: 77; display: flex; flex-direction: column; gap: 3px; min-width: 0; }
.tabs { display: grid; gap: 1px; grid-auto-rows: 9px; color: #ddd; }
.tabs.three { grid-template-columns: repeat(3, 1fr); }
.tabs.four { grid-template-columns: repeat(4, 1fr); }
.tabs button { background: linear-gradient(#707070, #5e5e5e); font-weight: 700; display: grid; place-items: center; }
.tabs svg { width: 8px; height: 5px; fill: none; stroke: #ccc; }
.tabs .on { background: #f8841d; color: #4c2600; }
.tabs .on svg { stroke: #5c3418; }
.mixknobs { flex: 1; background: #292929; display: grid; grid-template-columns: repeat(3, 1fr); align-content: space-around; padding: 2px 0; }
.mixknobs > span { height: 28px; }
.ab { display: flex; gap: 10px; }
.mixknobs s { color: #666; }
.l { background: #ddd; color: #222; padding: 0 1px; line-height: 6px; }
.filter { position: relative; flex: 117; display: flex; flex-direction: column; gap: 3px; min-width: 0; }
.fknobs { flex: 37; background: #222; display: grid; grid-template-columns: repeat(5, 1fr); padding: 4px 3px 0; align-content: space-evenly; }
.fknobs > span { height: 28px; }
.envs { flex: 59; background: #393939; display: grid; grid-template-columns: repeat(5, 1fr); justify-items: center; align-items: center; align-content: space-evenly; padding: 0 3px; color: #ddd; }
.tag { display: flex; flex-direction: column; align-items: center; color: #27b683; line-height: 7px; font-weight: 700; }
.mouse { position: absolute; left: 52px; top: 89px; color: #fff; }
.output { flex: 36; display: flex; flex-direction: column; gap: 3px; min-width: 0; }
.output > button { height: 17px; background: #232323; color: #ddd; border-top: 1px solid #345; }
.outs { flex: 1; background: #303030; display: flex; flex-direction: column; align-items: center; justify-content: space-between; padding: 3px 0 2px; min-height: 0; }
.pan, .duo, .marks2 { display: flex; align-items: flex-end; justify-content: space-between; width: 100%; padding: 0 4px; }
.pan { color: #888; }
.duo { padding: 0 1px; }
.pan .knob, .duo .knob { width: 16px; height: 16px; }
.marks2 { align-items: center; color: #999; padding: 0 7px; }
.dscroll { height: 6px; border-bottom: 3px solid #3b3b3b; padding-left: 14px; background: #0b0b0b; }
.dscroll i { display: block; width: 85%; height: 3px; background: #555; }

/* Note pads */
.keyboard { grid-column: 1 / -1; padding: 3px 0 1px 5px; background: #303030; border-top: 1px solid #555; overflow: hidden; }
.pads { height: 100%; display: grid; grid-template-columns: repeat(29, 1fr); grid-template-rows: repeat(5, 1fr); margin-right: -6px; }
.pads button { position: relative; background: #272727; border: 0 solid #333; border-width: 0 1px 1px 0; color: #909090; font-size: 7px; line-height: 8px; display: grid; place-items: center; }
.pads .nat { background: #505050; border-color: #3a3a3a; }
.pads .nat:nth-child(-n + 29) { background: #575757; }
.pads small { position: absolute; right: 2px; bottom: 1px; font-size: 7px; font-weight: 700; color: #ddd; }
```

FILE: app.js
```js
const $ = id => document.getElementById(id);
const icon = (n, w, h) => `<svg width="${w}" height="${h}"><use href="#${n}"/></svg>`;

// Colour palette
const colours = ['#4f4f4f','#777','#c6c6c6','#7d80ad','#a16d3f','#c49a67','#5360c4','#7d86dd','#9455c4',
  '#dc4568','#d92f23','#ff6006','#df9a10','#6d8c15','#0f8a44','#0e9c8e','#0f92d8','#b974ee',
  '#e8648a','#ec6150','#ff8336','#e5b04a','#9fb549','#3eb96d','#3ecbb2','#44b8ff','#8a8a8a'];
$('palette').innerHTML = colours.map(c => `<i style="background:${c}"></i>`).join('');

// Tracks: name, colour, icon, fader, options
const main = [
  { n: 'Ref', c: '#d28b14', i: 'audio', v: 73, mute: 1, idle: 1 },
  { n: 'Drum Machine', c: '#f55c08', i: 'keys', v: 80, mute: 1, clip: 'Kick.Templ…', cc: '#fb5e08' },
  { n: 'Poly Grid', c: '#6d8c15', i: 'keys', v: 80 },
  { n: 'Polysynth', c: '#0f8a44', i: 'keys', v: 71, clip: 'Generation …', cc: '#097a3d', l: '#0005' },
  { n: 'Poly Grid', c: '#0e9c8e', i: 'keys', v: 80 },
  { n: 'Polysynth', c: '#0f92d8', i: 'keys', v: 72, clip: 'Generation …', cc: '#089be9', l: '#0005', active: 1 }
];
const effects = [
  { n: 'Ping-Pong Delay', c: '#777', i: 'send', v: 80, idle: 1, m: 6 },
  { n: 'Reverb', c: '#777', i: 'send', v: 80, idle: 1, m: 3 },
  { n: 'Master', c: '#777', i: 'crown', v: 80, idle: 1, m: 7 }
];
const track = t => {
  const mark = t.active ? icon('dot', 7, 6) : icon('stop', 7, 7);
  const first = t.clip
    ? `<button class="clip${t.active ? ' sel' : ''}" style="--c:${t.cc};--l:${t.l || 'transparent'}">${icon('play', 5, 5)}${t.clip}</button>`
    : icon('stop', 7, 7);
  return `<div class="track">
    <div class="strip${t.active ? ' active' : ''}" style="border-color:${t.c}">
      <span class="tname">${t.n}</span>
      <button class="${t.active ? 'armed' : t.idle ? 'idle' : ''}" aria-label="Record">${icon('dot', 6, 6)}</button>
      <button class="${t.active ? 'solo' : ''}">S</button>
      <button class="${t.mute ? 'mute' : ''}">M</button>
      <span class="ticon">${icon(t.i, 7, 6)}</span>
      <input type="range" value="${t.v}" style="--v:${t.v}%" aria-label="${t.n} volume">
      <button class="opt" aria-label="Options">${icon('list', 6, 6)}</button>
      <span class="meter"><b style="height:${t.m || 0}px"></b></span>
    </div>
    <span class="stopcol">${icon('stop', 7, 7)}</span>
    <div class="slot">${first}</div>
    <div class="slot${t.active ? ' rec' : ''}">${mark}</div>
    <div class="slot${t.active ? ' rec' : ''}">${mark}</div>
    <span class="endcol">${icon('queue', 7, 7)}</span>
  </div>`;
};
$('tracks').innerHTML = main.map(track).join('');
$('effects').innerHTML = effects.map(track).join('');

// Rulers
const range = n => [...Array(n).keys()];
$('times').innerHTML = range(14).map(i => {
  const s = 45 + i * 5;
  return `<i>${Math.floor(s / 60)}:${String(s % 60).padStart(2, '0')}</i>`;
}).join('');
$('bars').innerHTML = range(35).map(i => `<i>${25 + i}</i>`).join('');
$('columns').innerHTML = range(35).map(() => '<i></i>').join('');

// Arpeggiator
const ys = [14, 21, 13, 21, 19, 10, 15, 18];
$('pattern').innerHTML =
  [1, 33, 43].map(y => `<path d="M0 ${y}h176" stroke="#2c2c2c"/>`).join('') +
  range(16).map(i => `<rect x="${i * 11}" y="22" width="9" height="1" fill="${i < 8 ? '#4a2e18' : '#7a4218'}"/>` +
    `<rect x="${i * 11}" y="${i === 6 ? 50 : 51}" width="9" height="${i === 6 ? 2 : 1}" fill="${i === 6 ? '#f3b928' : '#333'}"/>`).join('') +
  ys.map((y, i) => `<rect x="${i * 11}" y="${y}" width="9" height="1" fill="#e07a24"/>`).join('');
$('vel').innerHTML = $('gate').innerHTML = range(16).map(i => `<i class="${i < 8 ? 'f' : ''}"></i>`).join('');

// Knobs: pointer angle and value arc, in degrees from the top
const at = (r, a) => {
  const t = a * Math.PI / 180;
  return `${(10 + r * Math.sin(t)).toFixed(2)} ${(10 - r * Math.cos(t)).toFixed(2)}`;
};
const arc = (r, a, b) => `M${at(r, a)}A${r} ${r} 0 ${b - a > 180 ? 1 : 0} 1 ${at(r, b)}`;
document.querySelectorAll('.knob').forEach(k => {
  const a = +k.dataset.a, c = k.dataset.c || '#ee8126';
  const v = k.dataset.arc ? k.dataset.arc.split(',').map(Number) : null;
  k.innerHTML = `<svg viewBox="0 0 20 20"><path d="${arc(8.8, -140, 140)}" fill="none" stroke="#5e5e5e" stroke-width="1.3"/>` +
    (v ? `<path d="${arc(8.8, v[0], v[1])}" fill="none" stroke="${c}" stroke-width="1.6"/>` : '') +
    `<circle cx="10" cy="10" r="6.6" fill="url(#cap)" stroke="#222" stroke-width=".6"/>` +
    `<path d="M${at(2.5, a)}L${at(5.8, a)}" stroke="#f2f2f2" stroke-width="1.5"/></svg>`;
});

// Isomorphic pads: semitones across, fourths up; the last column runs past the edge
const names = ['C', '', 'D', '', 'E', 'F', '', 'G', '', 'A', '', 'B'];
let html = '';
for (let r = 0; r < 5; r++) for (let c = 0; c < 29; c++) {
  const p = 5 + c + 5 * (4 - r), n = names[p % 12];
  html += `<button class="${n ? 'nat' : ''}">${n}${n === 'C' && c < 28 ? `<small>${p / 12 - 2}</small>` : ''}</button>`;
}
$('pads').innerHTML = html;
```
